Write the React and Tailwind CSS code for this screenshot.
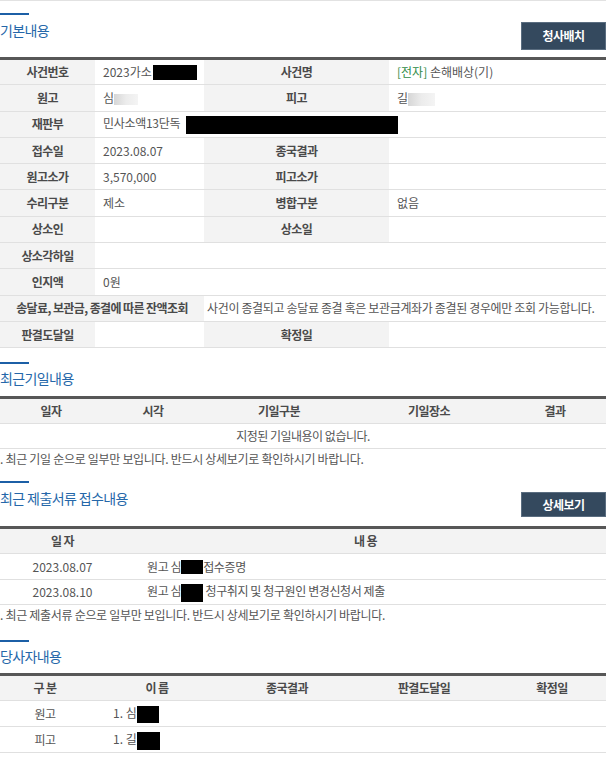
import React from 'react';

const Redact = ({ w, h = 15, className = '' }) => (
  <span className={`inline-block bg-black align-middle ${className}`} style={{ width: w, height: h }} />
);

const Blur = ({ w, h }) => (
  <span
    className="inline-block align-middle bg-gradient-to-r from-[#d6d6d6] via-[#ececec] to-[#f4f4f4]"
    style={{ width: w, height: h }}
  />
);

// blue bar + title, optional dark button on the right
const SectionTitle = ({ children, titleCls, button, buttonCls }) => (
  <div className="flex items-start justify-between">
    <div>
      <div className="w-[29px] h-[2px] bg-[#1c5fa6]" />
      <h2 className={`text-[14px] leading-[20px] tracking-[-0.6px] text-[#2567a9] ${titleCls}`}>{children}</h2>
    </div>
    {button && (
      <button className={`w-[85px] bg-[#34495e] border border-[#5a6d80] text-white text-[12px] font-bold tracking-[-0.5px] ${buttonCls}`}>
        {button}
      </button>
    )}
  </div>
);

const Note = ({ children }) => (
  <p className="pt-[1px] text-[12px] leading-[18px] tracking-[-0.3px] text-[#555] whitespace-nowrap">{children}</p>
);

const th = 'bg-[#f3f3f3] font-bold text-[#4a4a4a] text-center tracking-[-0.6px]';
const td = 'text-[#555] pl-[8px] text-left';
const row = 'h-[26.3px] border-b border-[#e0e0e0]';

export default function App() {
  return (
    <div className="w-[606px] min-h-[757px] bg-white border-t border-[#e2e2e2] font-['Noto_Sans_CJK_KR','Noto_Sans_KR',sans-serif] text-[12px] text-[#555]">
      {/* 기본내용 */}
      <div className="pt-[12px]">
        <SectionTitle titleCls="mt-[5px]" button="청사배치" buttonCls="mt-[9px] mb-[7px] h-[28px]">
          기본내용
        </SectionTitle>
        <table className="w-full table-fixed border-collapse border-t-[3px] border-[#575757]">
          <colgroup>
            <col className="w-[95px]" />
            <col className="w-[109px]" />
            <col className="w-[185px]" />
            <col />
          </colgroup>
          <tbody>
            <tr className={row}>
              <th className={th}>사건번호</th>
              <td className={td}>2023가소<Redact w={44} h={15} className="ml-[1px] -mt-[2px]" /></td>
              <th className={th}>사건명</th>
              <td className={td}><span className="text-[#2e8b46]">[전자]</span> 손해배상(기)</td>
            </tr>
            <tr className={row}>
              <th className={th}>원고</th>
              <td className={td}>심<Blur w={24} h={11} /></td>
              <th className={th}>피고</th>
              <td className={td}>길<Blur w={27} h={13} /></td>
            </tr>
            <tr className={row}>
              <th className={th}>재판부</th>
              <td className={`${td} whitespace-nowrap tracking-[-0.3px]`} colSpan={3}>
                민사소액13단독 <Redact w={212} h={18} className="ml-[3px]" />
              </td>
            </tr>
            <tr className={row}>
              <th className={th}>접수일</th>
              <td className={td}>2023.08.07</td>
              <th className={th}>종국결과</th>
              <td className={td}></td>
            </tr>
            <tr className={row}>
              <th className={th}>원고소가</th>
              <td className={td}>3,570,000</td>
              <th className={th}>피고소가</th>
              <td className={td}></td>
            </tr>
            <tr className={row}>
              <th className={th}>수리구분</th>
              <td className={td}>제소</td>
              <th className={th}>병합구분</th>
              <td className={td}>없음</td>
            </tr>
            <tr className={row}>
              <th className={th}>상소인</th>
              <td className={td}></td>
              <th className={th}>상소일</th>
              <td className={td}></td>
            </tr>
            <tr className={row}>
              <th className={th}>상소각하일</th>
              <td className={td} colSpan={3}></td>
            </tr>
            <tr className={row}>
              <th className={th}>인지액</th>
              <td className={td} colSpan={3}>0원</td>
            </tr>
            <tr className={row}>
              <th className={`${th} whitespace-nowrap`} colSpan={2}>송달료, 보관금, 종결에 따른 잔액조회</th>
              <td className="pl-[3px] text-left whitespace-nowrap tracking-[-0.35px]" colSpan={2}>
                사건이 종결되고 송달료 종결 혹은 보관금계좌가 종결된 경우에만 조회 가능합니다.
              </td>
            </tr>
            <tr className={row}>
              <th className={th}>판결도달일</th>
              <td className={td}></td>
              <th className={th}>확정일</th>
              <td className={td}></td>
            </tr>
          </tbody>
        </table>
      </div>

      {/* 최근기일내용 */}
      <div className="mt-[14px]">
        <SectionTitle titleCls="mt-[4px] mb-[8px]">최근기일내용</SectionTitle>
        <table className="w-full table-fixed border-collapse border-t-[3px] border-[#575757]">
          <colgroup>
            <col className="w-[102px]" />
            <col className="w-[102px]" />
            <col className="w-[150px]" />
            <col className="w-[150px]" />
            <col />
          </colgroup>
          <thead>
            <tr className="h-[26px] border-b border-[#e0e0e0]">
              <th className={th}>일자</th>
              <th className={th}>시각</th>
              <th className={th}>기일구분</th>
              <th className={th}>기일장소</th>
              <th className={th}>결과</th>
            </tr>
          </thead>
          <tbody>
            <tr className="h-[25px] border-b border-[#e0e0e0]">
              <td colSpan={5} className="text-center tracking-[-0.5px]">지정된 기일내용이 없습니다.</td>
            </tr>
          </tbody>
        </table>
        <Note>. 최근 기일 순으로 일부만 보입니다. 반드시 상세보기로 확인하시기 바랍니다.</Note>
      </div>

      {/* 최근 제출서류 접수내용 */}
      <div className="mt-[13px]">
        <SectionTitle titleCls="mt-[5px]" button="상세보기" buttonCls="mt-[11px] mb-[9px] h-[25px]">
          최근 제출서류 접수내용
        </SectionTitle>
        <table className="w-full table-fixed border-collapse border-t-[3px] border-[#575757]">
          <colgroup>
            <col className="w-[125px]" />
            <col />
          </colgroup>
          <thead>
            <tr className="h-[26px] border-b border-[#e0e0e0]">
              <th className={th}>일 자</th>
              <th className={th}>내 용</th>
            </tr>
          </thead>
          <tbody>
            <tr className="h-[25.5px] border-b border-[#e0e0e0]">
              <td className="text-center">2023.08.07</td>
              <td className="pl-[22px] tracking-[-0.4px] whitespace-nowrap">
                원고 심<Redact w={22} h={14} className="-mt-[2px]" />접수증명
              </td>
            </tr>
            <tr className="h-[25.5px] border-b border-[#e0e0e0]">
              <td className="text-center">2023.08.10</td>
              <td className="pl-[22px] tracking-[-0.4px] whitespace-nowrap">
                원고 심<Redact w={22} h={18} /> 청구취지 및 청구원인 변경신청서 제출
              </td>
            </tr>
          </tbody>
        </table>
        <Note>. 최근 제출서류 순으로 일부만 보입니다. 반드시 상세보기로 확인하시기 바랍니다.</Note>
      </div>

      {/* 당사자내용 */}
      <div className="mt-[16px]">
        <SectionTitle titleCls="mt-[4px] mb-[7px]">당사자내용</SectionTitle>
        <table className="w-full table-fixed border-collapse border-t-[3px] border-[#575757]">
          <colgroup>
            <col className="w-[90px]" />
            <col className="w-[134px]" />
            <col className="w-[126px]" />
            <col className="w-[148px]" />
            <col />
          </colgroup>
          <thead>
            <tr className="h-[26px] border-b border-[#e0e0e0]">
              <th className={th}>구 분</th>
              <th className={th}>이 름</th>
              <th className={th}>종국결과</th>
              <th className={th}>판결도달일</th>
              <th className={th}>확정일</th>
            </tr>
          </thead>
          <tbody>
            <tr className="h-[26px] border-b border-[#e0e0e0]">
              <td className="text-center tracking-[-0.6px]">원고</td>
              <td className="pl-[23px] whitespace-nowrap">1. 심<Redact w={22} h={17} /></td>
              <td />
              <td />
              <td />
            </tr>
            <tr className="h-[26px] border-b border-[#e0e0e0]">
              <td className="text-center tracking-[-0.6px]">피고</td>
              <td className="pl-[23px] whitespace-nowrap">1. 길<Redact w={23} h={18} /></td>
              <td />
              <td />
              <td />
            </tr>
          </tbody>
        </table>
      </div>
    </div>
  );
}
